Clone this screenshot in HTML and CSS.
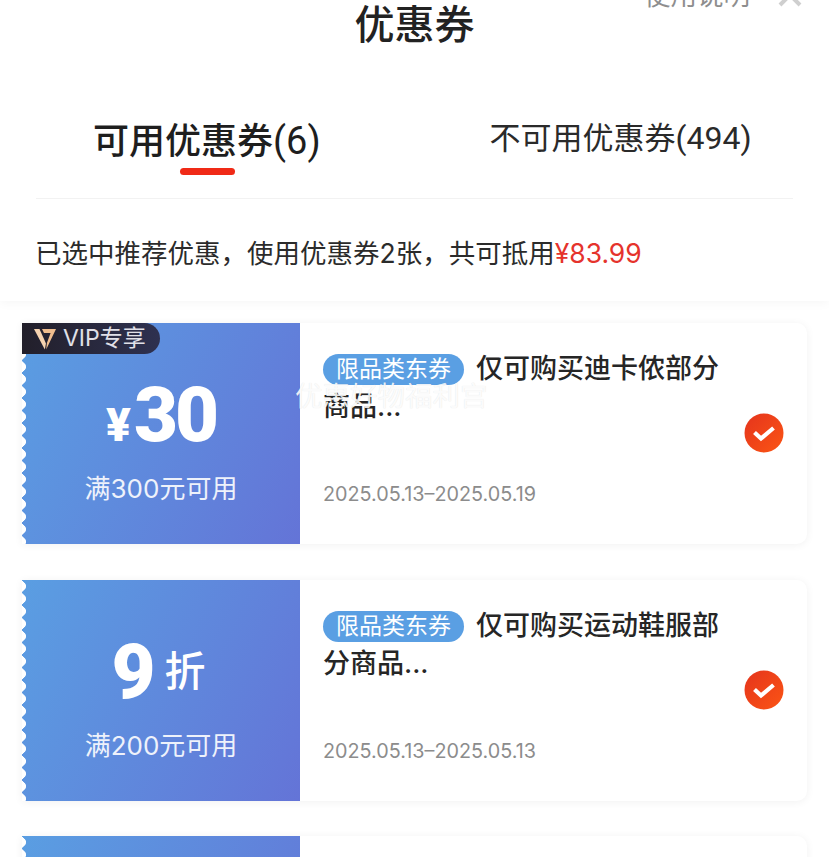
FILE: index.html
```html
<!DOCTYPE html>
<html lang="zh-CN">
<head>
    <meta charset="UTF-8">
    <meta name="viewport" content="width=device-width, initial-scale=1.0">
    <title>优惠券</title>
    <link rel="stylesheet" href="styles.css">
</head>
<body>
    <div class="phone">
        <svg class="svg-defs" width="0" height="0">
            <defs>
                <linearGradient id="check-fill" x1="0" y1="0" x2="1" y2="1">
                    <stop offset="0" stop-color="#e5341d"/>
                    <stop offset="1" stop-color="#fb5514"/>
                </linearGradient>
            </defs>
        </svg>

        <div class="sheet-head">
            <div class="title-bar">
                <h1 class="title">优惠券</h1>
                <div class="title-tools">
                    <span class="rule-link">使用说明</span>
                    <svg class="close-icon" viewBox="0 0 24 24" width="24" height="24">
                        <path d="M2 2 L22 22 M22 2 L2 22" stroke="#cfcfcf" stroke-width="4" fill="none"/>
                    </svg>
                </div>
            </div>
            <div class="tabs">
                <div class="tab tab-active">可用优惠券<span class="tab-count">(6)</span></div>
                <div class="tab">不可用优惠券<span class="tab-count">(494)</span></div>
            </div>
            <p class="summary">已选中推荐优惠，使用优惠券2张，共可抵用<span class="summary-price">¥83.99</span></p>
        </div>

        <div class="coupon-list">
            <div class="coupon">
                <div class="coupon-left">
                    <div class="vip-badge">
                        <svg class="vip-logo" viewBox="0 0 22 22" width="22" height="22">
                            <path d="M0 1 H5.5 L12 15.5 L10.8 21.5 Z" fill="#f6d3b0"/>
                            <path d="M8 1 H22 L12.2 21.5 L12.9 15 L16.6 5 H10 Z" fill="#f0bd8e"/>
                        </svg>
                        <span>VIP专享</span>
                    </div>
                    <div class="amount"><span class="amount-unit">¥</span><span class="amount-num">30</span></div>
                    <div class="condition">满300元可用</div>
                </div>
                <div class="coupon-right">
                    <div class="coupon-name"><span class="tag">限品类东券</span>仅可购买迪卡侬部分商品...</div>
                    <div class="coupon-date">2025.05.13–2025.05.19</div>
                    <svg class="check" viewBox="0 0 40 40" width="40" height="40">
                        <circle cx="20" cy="20" r="19.5" fill="url(#check-fill)"/>
                        <path d="M10.5 19.5 L17 25.5 L29.5 15" stroke="#fff" stroke-width="4.2" fill="none"/>
                    </svg>
                </div>
            </div>

            <div class="coupon">
                <div class="coupon-left">
                    <div class="amount"><span class="amount-num">9</span><span class="amount-zhe">折</span></div>
                    <div class="condition">满200元可用</div>
                </div>
                <div class="coupon-right">
                    <div class="coupon-name"><span class="tag">限品类东券</span>仅可购买运动鞋服部分商品...</div>
                    <div class="coupon-date">2025.05.13–2025.05.13</div>
                    <svg class="check" viewBox="0 0 40 40" width="40" height="40">
                        <circle cx="20" cy="20" r="19.5" fill="url(#check-fill)"/>
                        <path d="M10.5 19.5 L17 25.5 L29.5 15" stroke="#fff" stroke-width="4.2" fill="none"/>
                    </svg>
                </div>
            </div>

            <div class="coupon">
                <div class="coupon-left"></div>
                <div class="coupon-right"></div>
            </div>
        </div>

        <div class="watermark">优惠好物福利宫</div>
    </div>
</body>
</html>
```

FILE: styles.css
```css
html, body {
    margin: 0;
    padding: 0;
}

body {
    font-family: "Inter", "Noto Sans CJK SC", sans-serif;
    background-color: #fff;
}

.phone {
    position: relative;
    width: 829px;
    height: 857px;
    overflow: hidden;
    background-color: #fff;
}

.svg-defs {
    position: absolute;
}

.sheet-head {
    height: 301px;
    padding: 0 36px;
    box-sizing: border-box;
    background-color: #fff;
    box-shadow: 0 2px 10px rgba(0,0,0,0.04);
}

.title-bar {
    position: relative;
    height: 96px;
    display: flex;
    justify-content: center;
}

.title {
    margin: 0;
    padding-top: 1px;
    font-size: 40px;
    line-height: 48px;
    font-weight: 500;
    color: #222;
}

.title-tools {
    position: absolute;
    top: -18px;
    right: -9px;
    display: flex;
    align-items: center;
    gap: 28px;
}

.rule-link {
    font-size: 26.5px;
    line-height: 26px;
    color: #8e8e8e;
}

.tabs {
    display: flex;
    height: 102px;
    border-bottom: 1px solid #f2f2f2;
}

.tab {
    flex: 1;
    padding-top: 21px;
    padding-left: 93px;
    font-family: "Roboto", "Noto Sans CJK SC", sans-serif;
    font-size: 31px;
    line-height: 42px;
    color: #2a2a2a;
    white-space: nowrap;
}

.tab-count {
    font-size: 32px;
}

.tab-active {
    position: relative;
    padding-top: 24px;
    padding-left: 57px;
    font-size: 36px;
    font-weight: 500;
    color: #1e1e1e;
}

.tab-active .tab-count {
    font-size: 38px;
    font-weight: 400;
}

.tab-active::after {
    content: "";
    position: absolute;
    left: 144px;
    top: 72px;
    width: 55px;
    height: 7px;
    border-radius: 3.5px;
    background-color: #f02a17;
}

.summary {
    margin: 0 0 0 -1px;
    padding-top: 36px;
    font-size: 26.5px;
    line-height: 36px;
    color: #2b2b2b;
    white-space: nowrap;
}

.summary-price {
    color: #e5332c;
}

.coupon-list {
    padding: 22px 22px 0 22px;
    display: flex;
    flex-direction: column;
    gap: 35.5px;
}

.coupon {
    display: flex;
    width: 785px;
    height: 221px;
    flex-shrink: 0;
    background-color: #fff;
    border-radius: 0 10px 10px 0;
    box-shadow: 0 1px 8px rgba(0,0,0,0.06);
}

.coupon-left {
    position: relative;
    width: 278px;
    flex-shrink: 0;
    display: flex;
    flex-direction: column;
    align-items: center;
    color: #fff;
}

/* blue ticket face with the scalloped left edge */
.coupon-left::before {
    content: "";
    position: absolute;
    top: 0;
    right: 0;
    bottom: 0;
    left: 0;
    background: linear-gradient(115deg, #5a9ee2 0%, #6474d7 100%);
    -webkit-mask: radial-gradient(circle 5.5px at -1.5px 6.25px, transparent 96%, #000 100%) 0 0 / 100% 12.5px repeat-y;
    mask: radial-gradient(circle 5.5px at -1.5px 6.25px, transparent 96%, #000 100%) 0 0 / 100% 12.5px repeat-y;
}

.vip-badge {
    position: absolute;
    top: 0;
    left: 0;
    height: 31px;
    width: 138px;
    box-sizing: border-box;
    padding-left: 12px;
    display: flex;
    align-items: center;
    gap: 7px;
    font-size: 23px;
    line-height: 29px;
    color: #e0e0e8;
    background: linear-gradient(90deg, #221f2a, #2e3150);
    border-radius: 0 16px 16px 0;
}

.amount {
    position: relative;
    display: flex;
    align-items: baseline;
    justify-content: center;
    height: 68px;
    margin-top: 58px;
    font-family: "Roboto", "Noto Sans CJK SC", sans-serif;
    font-weight: 900;
}

.amount-unit {
    margin-right: 3px;
    font-size: 46px;
}

.amount-num {
    font-size: 76px;
    line-height: 68px;
    letter-spacing: -3px;
}

.amount-zhe {
    align-self: center;
    margin-left: 12px;
    margin-right: 5px;
    font-size: 41px;
    line-height: 66px;
    font-weight: 500;
}

.condition {
    position: relative;
    margin-top: 22px;
    font-size: 26px;
    line-height: 36px;
    color: #eef2fb;
}

.coupon-right {
    position: relative;
    flex: 1;
    padding: 27px 66px 0 23px;
}

.coupon-name {
    font-size: 27px;
    line-height: 38px;
    font-weight: 500;
    color: #262626;
}

.tag {
    display: inline-block;
    height: 31px;
    line-height: 31px;
    margin-right: 12px;
    padding: 0 13px;
    font-size: 23px;
    font-weight: 400;
    color: #fff;
    background-color: #5a9fe3;
    border-radius: 16px;
    vertical-align: 1px;
}

.coupon-date {
    position: absolute;
    left: 23px;
    top: 158px;
    font-size: 19.8px;
    line-height: 26px;
    color: #8c8c8c;
}

.check {
    position: absolute;
    right: 23px;
    top: 90px;
}

.watermark {
    position: absolute;
    left: 295px;
    top: 380px;
    font-size: 27.5px;
    line-height: 32px;
    color: rgba(255,255,255,0.88);
    text-shadow: 0 0 1px rgba(0,0,0,0.12);
    white-space: nowrap;
}
```
